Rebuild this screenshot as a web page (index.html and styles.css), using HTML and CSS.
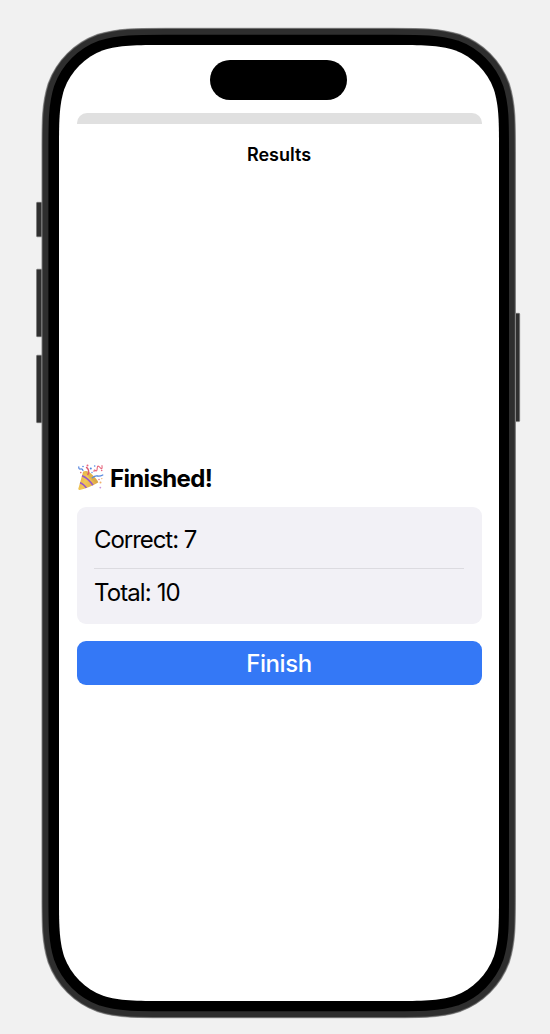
FILE: index.html
```html
<!DOCTYPE html>
<html lang="en">
<head>
<meta charset="utf-8">
<title>Results</title>
<link rel="stylesheet" href="styles.css">
</head>
<body>
<div class="stage">
  <svg class="device" viewBox="0 0 550 1034" aria-hidden="true">
    <defs>
      <path id="screen" d="M166 45H392C422.810 45 438.210 45 454.800 50.240C472.900 56.830 487.170 71.100 493.760 89.200C499 105.790 499 121.190 499 152V894C499 924.810 499 940.210 493.760 956.800C487.170 974.900 472.900 989.170 454.800 995.760C438.210 1001 422.810 1001 392 1001H166C135.190 1001 119.790 1001 103.200 995.760C85.100 989.170 70.830 974.900 64.240 956.800C59 940.210 59 924.810 59 894V152C59 121.190 59 105.790 64.240 89.200C70.830 71.100 85.100 56.830 103.200 50.240C119.790 45 135.190 45 166 45Z"/>
    </defs>
    <g fill="#303030" stroke="#777" stroke-width=".6">
      <rect x="36.500" y="202.300" width="6.500" height="34.500" rx=".8"/>
      <rect x="36.500" y="269.200" width="6.500" height="67.500" rx=".8"/>
      <rect x="36.500" y="355.200" width="6.500" height="67.500" rx=".8"/>
      <rect x="514" y="313.300" width="5.700" height="108.300" rx=".8"/>
    </g>
    <g transform="translate(-.3 0)">
      <use href="#screen" stroke="#9a9a9a" stroke-width="34.600"/>
      <use href="#screen" stroke="#606060" stroke-width="33.400"/>
      <use href="#screen" stroke="#2e2e2e" stroke-width="32"/>
      <use href="#screen" stroke="#000" stroke-width="20.600"/>
    </g>
    <use href="#screen" fill="#fff"/>
  </svg>
  <main class="screen">
    <div class="island"></div>
    <div class="sheet-edge"></div>
    <h1 class="nav-title">Results</h1>
    <section class="results">
      <h2 class="heading">
        <svg class="popper" viewBox="0 0 27 27" aria-hidden="true">
          <defs>
            <linearGradient id="gold" x1="0" y1="0" x2="1" y2=".5"><stop stop-color="#d59b32"/><stop offset=".5" stop-color="#f3c858"/><stop offset="1" stop-color="#d9a243"/></linearGradient>
            <clipPath id="cone"><path d="M1.400 24.500 6.200 7.600Q10 5.500 15.500 11T21.300 18.500Q11.500 24 2.800 26Q1.200 26.300 1.400 24.500Z"/></clipPath>
          </defs>
          <g clip-path="url(#cone)">
            <path fill="url(#gold)" d="M0 0H27V27H0Z"/>
            <path d="M2.500 18.500Q7 20 10 25M4.500 11.500Q12 14.500 16.800 22.500" fill="none" stroke="#9558c9" stroke-width="1.500"/>
            <path d="M8.500 7Q10.500 14 19.500 19L21 17Q15 8 9 6Z" fill="#c9943f" opacity=".35"/>
          </g>
          <g fill="none" stroke-linecap="round">
            <path d="M10.800 10.500Q12.300 8.500 11.500 6.200T9.500 3.500" stroke="#dc5871" stroke-width="1.400"/>
            <path d="M15.300 13.700Q18 11.500 20.500 12T25.800 11" stroke="#5788dc" stroke-width="1.300"/>
            <path d="M17 7.500Q17 5 18.500 6.500T20.200 4.200T23 3.500T25 1.500" stroke="#e6657c" stroke-width="1.100"/>
            <path d="M1.800 2.800Q1.500 5.300 3.500 5T6 6.500" stroke="#5686df" stroke-width="1.200"/>
          </g>
          <g fill="#4f87e2"><circle cx="6" cy="2.500" r=".8"/><circle cx="13.800" cy="4.600" r="1"/><circle cx="17.700" cy="2" r=".8"/><circle cx="15" cy="8.500" r=".7"/></g>
          <g fill="#e8667f"><circle cx="3.800" cy="8.600" r=".8"/><circle cx="10.500" cy="1.500" r="1"/><circle cx="24.700" cy="6.500" r=".8"/><circle cx="22" cy="15.500" r=".7"/></g>
          <g fill="#eeb06c"><circle cx="23.500" cy="18.500" r="1"/><circle cx="24.800" cy="14.600" r=".7"/></g>
          <circle cx="23.300" cy="23.600" r=".9" fill="#c991da"/>
        </svg>
        <span>Finished!</span>
      </h2>
      <div class="card">
        <p class="row correct">Correct: 7</p>
        <p class="row total">Total: 10</p>
      </div>
      <button class="finish" type="button"><span>Finish</span></button>
    </section>
  </main>
</div>
</body>
</html>
```
FILE: styles.css
```css
* { box-sizing: border-box; }
body {
  margin: 0;
  background: #f1f1f1;
  color: #000;
  font-family: Inter, "Liberation Sans", sans-serif;
}
h1, h2, p { margin: 0; }
.stage {
  position: relative;
  width: 550px;
  height: 1034px;
  padding: 45px 51px 33px 59px;
  overflow: hidden;
}
.device {
  position: absolute;
  inset: 0;
  width: 550px;
  height: 1034px;
}
.screen {
  position: relative;
  display: flex;
  flex-direction: column;
  height: 956px;
  padding: 15.4px 17.5px 0;
}
.island {
  align-self: center;
  width: 137px;
  height: 40px;
  margin-right: 1px;
  border-radius: 20px;
  background: #000;
}
.sheet-edge {
  height: 11px;
  margin-top: 12.6px;
  border-radius: 10px 10px 0 0;
  background: #e0e0e0;
}
.nav-title {
  margin-top: 19px;
  font-size: 18px;
  line-height: 24px;
  font-weight: 600;
  letter-spacing: 0;
  text-align: center;
}
.results { margin-top: 295px; }
.heading {
  display: flex;
  align-items: center;
  gap: 6.5px;
  height: 32px;
  font-size: 24px;
  line-height: 32px;
  font-weight: 700;
  letter-spacing: -0.65px;
}
.heading span { padding-top: 2px; }
.popper {
  width: 27px;
  height: 27px;
  flex: none;
}
.card {
  height: 117px;
  margin-top: 13px;
  padding: 8px 17.5px;
  border-radius: 9px;
  background: #f2f1f6;
}
.row {
  display: flex;
  align-items: center;
  font-size: 24px;
  font-weight: 400;
  letter-spacing: -0.9px;
}
.correct {
  height: 54px;
  padding-bottom: 3px;
  border-bottom: 1px solid #dcdbe0;
  letter-spacing: -1.05px;
}
.total {
  height: 46px;
  padding-top: 1px;
}
.finish {
  display: flex;
  align-items: center;
  justify-content: center;
  width: 100%;
  height: 44px;
  margin-top: 17px;
  padding: 2px 0 0;
  border: 0;
  border-radius: 9px;
  background: #3478f6;
  color: #fff;
  font: 500 24px/32px Inter, "Liberation Sans", sans-serif;
  letter-spacing: -0.4px;
}
```
